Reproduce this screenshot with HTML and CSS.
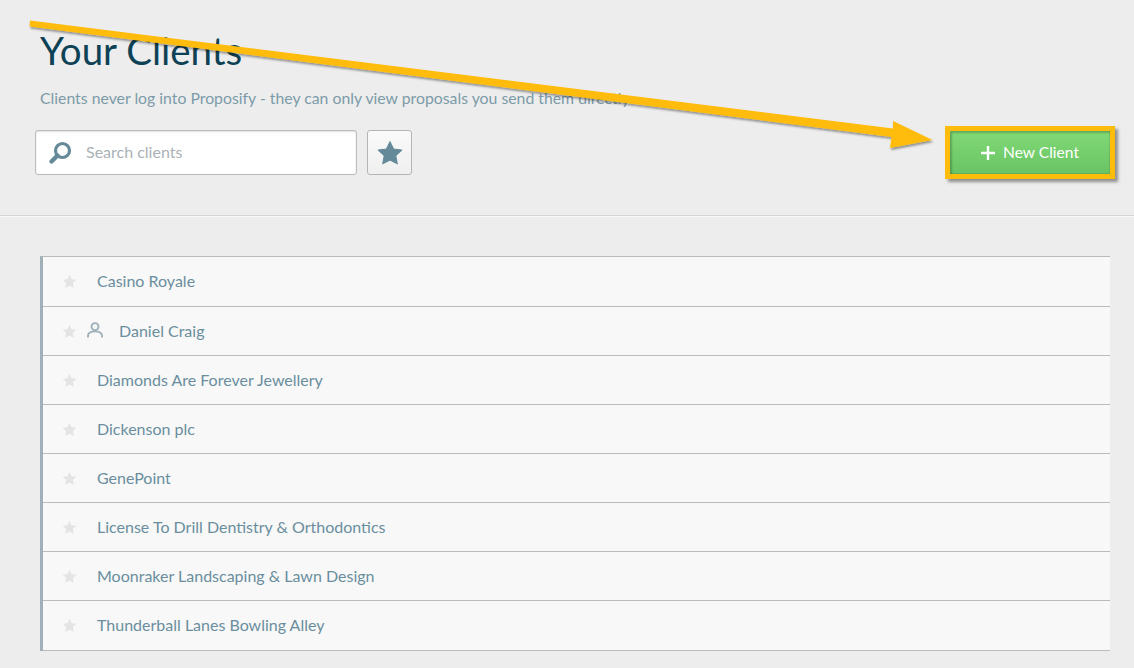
FILE: index.html
```html
<!DOCTYPE html>
<html lang="en">
<head>
<meta charset="utf-8">
<title>Your Clients</title>
<link rel="stylesheet" href="styles.css">
</head>
<body>
<header class="top">
  <h1 class="title">Your Clients</h1>
  <p class="lead">Clients never log into Proposify - they can only view proposals you send them directly</p>
  <div class="tools">
    <label class="search">
      <svg class="search-icon" viewBox="0 0 24 24" width="24" height="24"><circle cx="14.500" cy="9.500" r="7" fill="none" stroke="#648a99" stroke-width="3.200"/><path d="M9.500 14.500 3.500 20.500" stroke="#648a99" stroke-width="4.400" stroke-linecap="round"/></svg>
      <span class="placeholder">Search clients</span>
    </label>
    <button class="fav" type="button" aria-label="Favourites">
      <svg viewBox="0 0 24 24" width="26" height="26"><path d="M12 1.500 15.300 8.300 22.800 9.300 17.300 14.500 18.700 22 12 18.400 5.300 22 6.700 14.500 1.200 9.300 8.700 8.300Z" fill="#648a99" stroke="#648a99" stroke-width="1" stroke-linejoin="round"/></svg>
    </button>
    <button class="new" type="button">
      <svg class="plus" viewBox="0 0 14 14" width="14" height="14"><path d="M5.800 0h2.400v5.800H14v2.400H8.200V14H5.800V8.200H0V5.800h5.800Z" fill="#fff"/></svg><span class="new-label">New Client</span>
    </button>
  </div>
</header>
<main class="content">
  <ul class="list">
    <li class="row"><svg class="star" viewBox="0 0 24 24"><use href="#s"/></svg><span class="name">Casino Royale</span></li>
    <li class="row"><svg class="star" viewBox="0 0 24 24"><use href="#s"/></svg><svg class="person" viewBox="0 0 16 16" width="16" height="16"><circle cx="8" cy="4.600" r="3.500" fill="none" stroke="#9fb0ba" stroke-width="1.900"/><path d="M1 15.500v-1.500c0-3 3-4.600 7-4.600s7 1.600 7 4.600v1.500" fill="none" stroke="#9fb0ba" stroke-width="1.900"/></svg><span class="name">Daniel Craig</span></li>
    <li class="row"><svg class="star" viewBox="0 0 24 24"><use href="#s"/></svg><span class="name">Diamonds Are Forever Jewellery</span></li>
    <li class="row"><svg class="star" viewBox="0 0 24 24"><use href="#s"/></svg><span class="name">Dickenson plc</span></li>
    <li class="row"><svg class="star" viewBox="0 0 24 24"><use href="#s"/></svg><span class="name">GenePoint</span></li>
    <li class="row"><svg class="star" viewBox="0 0 24 24"><use href="#s"/></svg><span class="name">License To Drill Dentistry &amp; Orthodontics</span></li>
    <li class="row"><svg class="star" viewBox="0 0 24 24"><use href="#s"/></svg><span class="name">Moonraker Landscaping &amp; Lawn Design</span></li>
    <li class="row"><svg class="star" viewBox="0 0 24 24"><use href="#s"/></svg><span class="name">Thunderball Lanes Bowling Alley</span></li>
  </ul>
</main>
<svg class="defs" width="0" height="0"><defs><path id="s" d="M12 1.200 15.300 8.300 23 9.300 17.300 14.500 18.900 22.200 12 18.400 5.100 22.200 6.700 14.500 1 9.300 8.700 8.300Z" fill="#e4e4e4"/></defs></svg>
<svg class="arrow" viewBox="0 0 1134 668" width="1134" height="668">
  <defs><filter id="ds" x="-5%" y="-20%" width="110%" height="140%"><feDropShadow dx="1" dy="2" stdDeviation="1" flood-color="#000" flood-opacity=".4"/></filter></defs>
  <path d="M30 20.500 893 128.500 893 121 932.500 140 890 148 891.500 137 29.500 26.500Z" fill="#ffbc0a" filter="url(#ds)"/>
</svg>
</body>
</html>
```
FILE: styles.css
```css
* { box-sizing: border-box; }
html, body { margin: 0; padding: 0; }
body {
  width: 1134px;
  height: 668px;
  overflow: hidden;
  position: relative;
  background: #ededed;
  font-family: Lato, "Liberation Sans", sans-serif;
  color: #648a99;
}
.top {
  height: 216px;
  padding: 27px 19px 0 35px;
  border-bottom: 1px solid #d5d5d5;
  box-shadow: 0 1px 0 #f8f8f8;
}
.title {
  margin: 0 0 0 5px;
  font-size: 38.500px;
  line-height: 46px;
  font-weight: 400;
  color: #0d4256;
}
.lead {
  margin: 14px 0 0 5px;
  font-size: 15.800px;
  line-height: 22px;
  color: #7c9ba8;
}
.tools {
  display: flex;
  align-items: center;
  gap: 10px;
  margin-top: 17px;
}
.search {
  width: 322px;
  height: 45px;
  display: flex;
  align-items: center;
  gap: 14px;
  padding-left: 12px;
  background: #fff;
  border: 1px solid #bbb;
  border-radius: 3px;
  box-shadow: inset 0 1px 2px rgba(0,0,0,.12);
}
.placeholder { font-size: 16px; line-height: 20px; margin-top: -2px; color: #aab2b6; }
.fav {
  width: 45px;
  height: 45px;
  padding: 0;
  display: flex;
  align-items: center;
  justify-content: center;
  background: linear-gradient(#fafafa, #efefef);
  border: 1px solid #b5b5b5;
  border-radius: 3px;
}
.new {
  margin-left: auto;
  width: 170px;
  height: 53px;
  padding: 0;
  display: flex;
  align-items: center;
  justify-content: center;
  border: 5px solid #ffbc0a;
  background: linear-gradient(#80d975, #6ac464);
  box-shadow: 3px 3px 3px rgba(0,0,0,.4), inset 2px 2px 2px rgba(0,0,0,.22), inset -1px -1px 1px rgba(0,0,0,.1);
  color: #fff;
  font-family: Lato, "Liberation Sans", sans-serif;
  font-size: 15.600px;
  line-height: 20px;
}
.plus { margin-right: 8px; }
.new-label { margin-top: -2px; }
.content { padding: 40px 24px 0 40px; }
.list {
  list-style: none;
  margin: 0;
  padding: 0;
  background: #f8f8f8;
  border-left: 3px solid #a0b0b8;
  border-top: 1px solid #bbb;
}
.row {
  height: 49px;
  display: flex;
  align-items: center;
  padding-left: 19px;
  border-bottom: 1px solid #bbb;
  font-size: 16px;
}
.row:first-child, .row:last-child { height: 50px; }
.star { width: 15px; height: 15px; flex: none; margin-right: 20px; }
.person { margin: -3px 16px 0 -10px; flex: none; }
.name { margin-top: -2px; color: #6a8e9e; }
.defs { position: absolute; }
.arrow { position: absolute; left: 0; top: 0; pointer-events: none; }
```
